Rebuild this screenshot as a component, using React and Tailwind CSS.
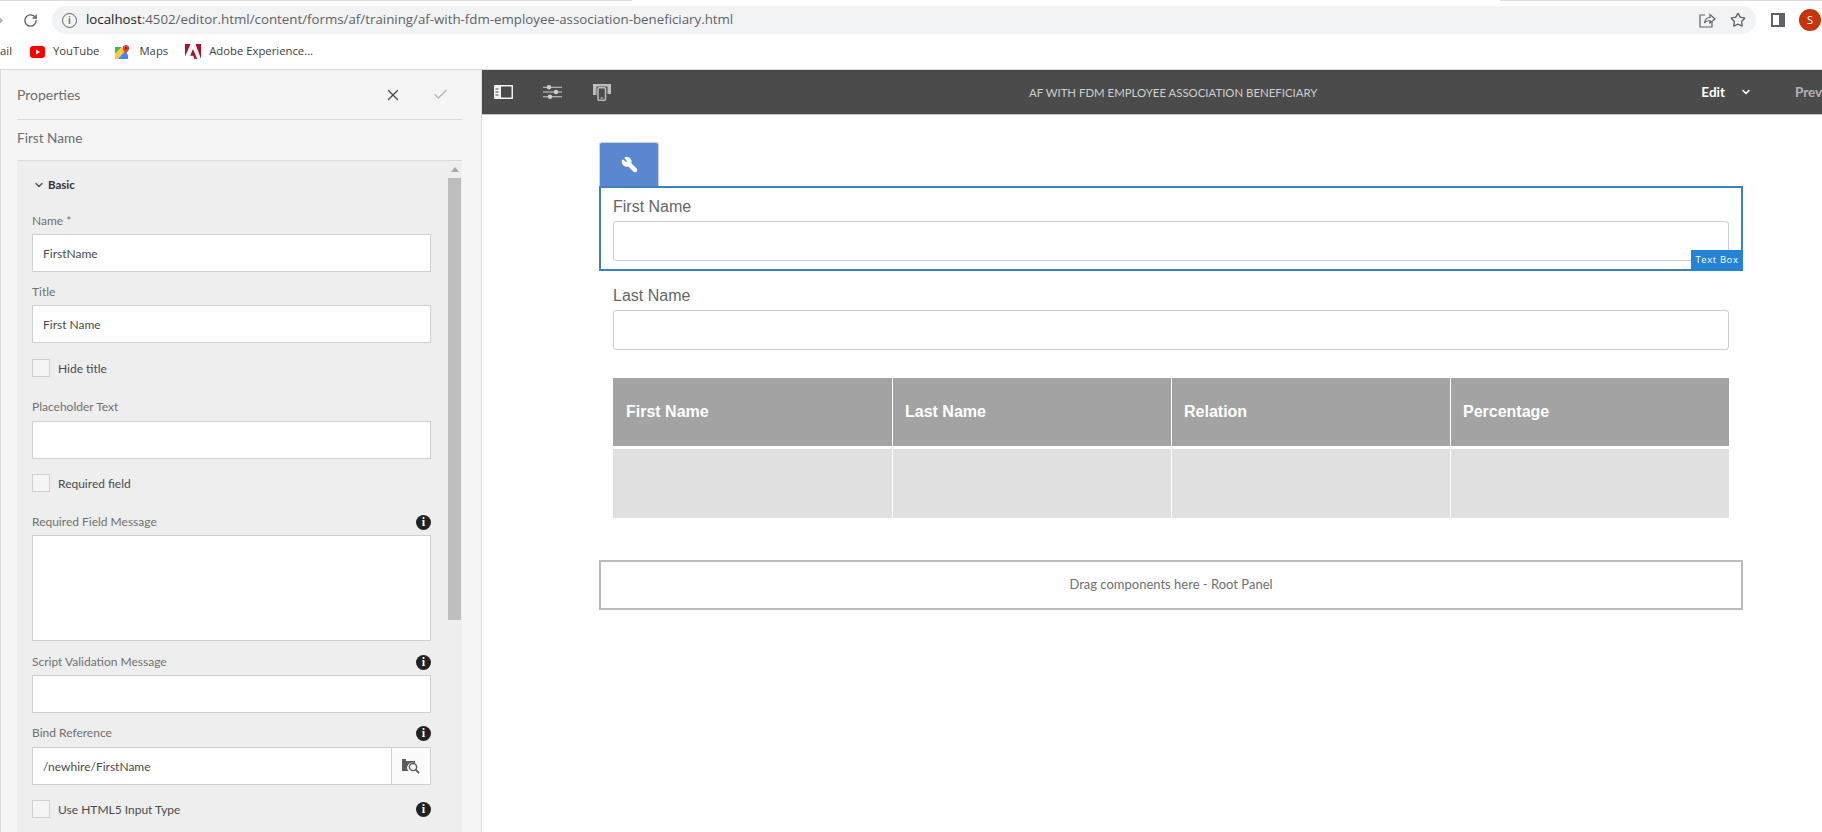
import { ArrowRight, Check, ChevronDown, RotateCw, Star, X, Wrench } from 'lucide-react'

function YouTubeIcon() {
  return (
    <svg width="15" height="12" viewBox="0 0 15 12">
      <rect width="15" height="12" rx="3" fill="#f00" />
      <path d="M6 3.5 L10 6 L6 8.5 Z" fill="#fff" />
    </svg>
  )
}

function MapsIcon() {
  return (
    <svg width="15" height="14" viewBox="0 0 15 14">
      <path d="M0 2 L7 2 L0 9 Z" fill="#48b564" />
      <path d="M0 9 L7 2 L10 6 L3 14 L0 14 Z" fill="#fcc934" />
      <path d="M3 14 L10 6 L13 10 L13 14 Z" fill="#4285f4" />
      <path d="M11 0 C9 0 7.7 1.5 7.7 3.2 C7.7 5.2 10 6.8 11 8.8 C12 6.8 14.3 5.2 14.3 3.2 C14.3 1.5 13 0 11 0 Z" fill="#ea4335" />
      <circle cx="11" cy="3.2" r="1.2" fill="#8a2a20" />
    </svg>
  )
}

function AdobeIcon() {
  return (
    <svg width="16" height="15" viewBox="0 0 16 15">
      <path d="M0 0 H5.5 L0 12.5 Z" fill="#b5092e" />
      <path d="M10.5 0 H16 V15 Z" fill="#b5092e" />
      <path d="M8 5 L12.2 15 H9.5 L8.3 11.8 H5.2 Z" fill="#b5092e" />
    </svg>
  )
}

function ShareIcon() {
  return (
    <svg width="18" height="18" viewBox="0 0 18 18" fill="none" stroke="#5f6368" strokeWidth="1.2">
      <path d="M7 4 H2 V16 H14 V11" />
      <path d="M6.5 12 C7 8.5 9.5 6.5 12 6.5 V3.5 L17 8 L12 12 V9.5 C10 9.5 8 10 6.5 12 Z" />
    </svg>
  )
}

function PanelToggleIcon() {
  return (
    <svg width="19" height="14" viewBox="0 0 19 14" fill="none">
      <rect x="0.75" y="0.75" width="17.5" height="12.5" stroke="#f2f2f2" strokeWidth="1.5" />
      <path d="M0 0 H7 V14 H0 Z" fill="#f2f2f2" />
      <path d="M1.5 4 H4.5 M1.5 7 H4.5 M1.5 10 H4.5" stroke="#4b4b4b" strokeWidth="1.1" />
    </svg>
  )
}

function SlidersIcon() {
  return (
    <svg width="19" height="14" viewBox="0 0 19 14" fill="none">
      <path d="M0 2.2 H19 M0 7 H19 M0 11.8 H19" stroke="#cfcfcf" strokeWidth="1.1" />
      <circle cx="6" cy="2.2" r="2.2" fill="#cfcfcf" />
      <circle cx="13" cy="7" r="2.2" fill="#cfcfcf" />
      <circle cx="7" cy="11.8" r="2.2" fill="#cfcfcf" />
    </svg>
  )
}

function DevicesIcon() {
  return (
    <svg width="18" height="17" viewBox="0 0 18 17" fill="none">
      <path d="M0 0 H18 V10 H14.5 V2.5 H3.5 V11 H0 Z" fill="#bcbcbc" />
      <rect x="5" y="3.8" width="7.5" height="12.4" rx="1" stroke="#bcbcbc" strokeWidth="1.5" />
      <path d="M7.5 14 H10" stroke="#bcbcbc" strokeWidth="1.2" />
    </svg>
  )
}

function FolderSearchIcon() {
  return (
    <svg width="18" height="16" viewBox="0 0 18 16">
      <path d="M0 1 H4 V3 H13 V5.5 A5 5 0 0 0 6.5 13 H0 Z" fill="#5c5c5c" />
      <circle cx="11" cy="9" r="3.6" fill="none" stroke="#5c5c5c" strokeWidth="1.5" />
      <path d="M13.6 11.6 L17 15" stroke="#5c5c5c" strokeWidth="1.8" />
    </svg>
  )
}

function InfoDot() {
  return (
    <span className="flex h-[15px] w-[15px] items-center justify-center rounded-full bg-[#222]">
      <span className="font-['Liberation_Serif',serif] text-[12px] leading-none font-bold text-white">i</span>
    </span>
  )
}

function Label({ children, info, className }) {
  return (
    <div className={`flex h-[16px] items-center justify-between text-[12px] text-[#707070] ${className}`}>
      <span>{children}</span>
      {info && <InfoDot />}
    </div>
  )
}

function TextField({ value, className = 'h-[38px]' }) {
  return (
    <div className={`flex items-center border border-[#d0d0d0] bg-white px-[10px] pt-[1px] text-[12px] text-[#4b4b4b] ${className}`}>
      {value}
    </div>
  )
}

function CheckField({ label, info }) {
  return (
    <div className="flex h-[18px] items-center">
      <span className="h-[18px] w-[18px] border border-[#d0d0d0] bg-[#f5f5f5]" />
      <span className="ml-[8px] pt-[1px] text-[12px] text-[#4b4b4b]">{label}</span>
      {info && <span className="ml-auto"><InfoDot /></span>}
    </div>
  )
}

function Browser() {
  return (
    <div className="h-[70px] shrink-0 border-b border-[#d8d8d8] bg-white font-['Open_Sans',sans-serif]">
      <div className="flex h-[1px] justify-between">
        <span className="w-[632px] bg-[#dedede]" />
        <span className="w-[322px] bg-[#dedede]" />
      </div>
      <div className="flex h-[34px] items-center pt-[4px]">
        <ArrowRight className="-ml-[10px] h-[15px] w-[15px] shrink-0 text-[#b4b4b4]" strokeWidth={2.4} />
        <RotateCw className="ml-[18px] h-[15px] w-[15px] shrink-0 text-[#5f6368]" strokeWidth={2.2} />
        <div className="ml-[14px] flex h-[28px] w-[1704px] shrink-0 items-center rounded-full bg-[#f1f3f4] pl-[10px]">
          <span className="flex h-[15px] w-[15px] items-center justify-center rounded-full border border-[#5f6368] text-[10px] leading-none font-semibold text-[#5f6368]">i</span>
          <span className="ml-[9px] text-[13.3px] text-[#202124]">localhost<span className="text-[#5f6368]">:4502/editor.html/content/forms/af/training/af-with-fdm-employee-association-beneficiary.html</span></span>
          <span className="ml-auto flex items-center gap-[14px] pr-[10px]">
            <ShareIcon />
            <Star className="h-[16px] w-[16px] text-[#5f6368]" strokeWidth={2} />
          </span>
        </div>
        <span className="ml-[15px] flex h-[14px] w-[14px] shrink-0 border-2 border-[#5f6368] bg-white">
          <span className="ml-auto h-full w-[4px] bg-[#5f6368]" />
        </span>
        <span className="ml-[14px] flex h-[22px] w-[22px] shrink-0 items-center justify-center rounded-full bg-[#c5350b] text-[11px] text-white">S</span>
      </div>
      <div className="flex h-[33px] items-center text-[11.3px] text-[#3c4043]">
        <span className="w-[13px] overflow-hidden">ail</span>
        <span className="ml-[17px] flex"><YouTubeIcon /></span>
        <span className="ml-[8px]">YouTube</span>
        <span className="ml-[16px] flex"><MapsIcon /></span>
        <span className="ml-[9px]">Maps</span>
        <span className="ml-[17px] flex"><AdobeIcon /></span>
        <span className="ml-[8px]">Adobe Experience...</span>
      </div>
    </div>
  )
}

function PropertiesPanel() {
  return (
    <aside className="flex h-full w-[482px] shrink-0 flex-col overflow-hidden border-x border-x-[#dcdcdc] bg-[#f5f5f5] font-['Lato',sans-serif]">
      <div className="mr-[19px] ml-[16px] flex h-[50px] shrink-0 items-center justify-between border-b border-[#dadada] text-[14px] text-[#6e6e6e]">
        <span>Properties</span>
        <span className="flex items-center gap-[30px] pr-[13px]">
          <X className="h-[18px] w-[18px] text-[#4b4b4b]" strokeWidth={1.8} />
          <Check className="h-[17px] w-[17px] text-[#b5b5b5]" strokeWidth={1.8} />
        </span>
      </div>
      <div className="mr-[19px] ml-[16px] flex h-[41px] shrink-0 items-center border-b border-[#dadada] pb-[3px] text-[13.6px] text-[#6e6e6e]">First Name</div>
      <div className="mr-[19px] ml-[16px] flex min-h-0 flex-1 bg-[#eeeeee]">
        <div className="w-[431px] pr-[17px] pl-[15px]">
          <div className="flex h-[48px] items-center text-[11.5px] font-bold text-[#333]">
            <ChevronDown className="ml-[1px] h-[12px] w-[12px] text-[#4b4b4b]" strokeWidth={2.5} />
            <span className="ml-[3px]">Basic</span>
          </div>
          <Label className="mt-[4px] mb-[5px]">Name *</Label>
          <TextField value="FirstName" />
          <Label className="mt-[12px] mb-[5px]">Title</Label>
          <TextField value="First Name" />
          <div className="mt-[16px]"><CheckField label="Hide title" /></div>
          <Label className="mt-[22px] mb-[6px]">Placeholder Text</Label>
          <TextField />
          <div className="mt-[15px]"><CheckField label="Required field" /></div>
          <Label className="mt-[22px] mb-[5px]" info>Required Field Message</Label>
          <TextField className="h-[106px]" />
          <Label className="mt-[13px] mb-[5px]" info>Script Validation Message</Label>
          <TextField />
          <Label className="mt-[12px] mb-[6px]" info>Bind Reference</Label>
          <div className="flex h-[38px] border border-[#d0d0d0] bg-white text-[12px] text-[#4b4b4b]">
            <div className="flex flex-1 items-center px-[10px] pt-[1px]">/newhire/FirstName</div>
            <div className="flex w-[39px] items-center justify-center rounded-r-[3px] border-l border-[#d0d0d0] bg-[#fbfbfb]"><FolderSearchIcon /></div>
          </div>
          <div className="mt-[15px]"><CheckField label="Use HTML5 Input Type" info /></div>
        </div>
        <div className="flex w-[13px] flex-col">
          <div className="flex h-[17px] items-center justify-center">
            <span className="h-0 w-0 border-x-[4px] border-b-[5px] border-x-transparent border-b-[#a8a8a8]" />
          </div>
          <div className="h-[442px] bg-[#bebebe]" />
        </div>
      </div>
    </aside>
  )
}

function FieldLabel({ label }) {
  return <div className="flex h-[20px] items-center text-[16px] text-[#666]">{label}</div>
}

function BeneficiaryTable() {
  const cols = ['First Name', 'Last Name', 'Relation', 'Percentage']
  return (
    <div className="mx-[14px] mt-[28px]">
      <div className="grid h-[68px] grid-cols-4 bg-[#a3a3a3]">
        {cols.map((c, i) => (
          <div key={c} className={`flex items-center text-[16px] font-bold text-white ${i > 0 ? 'border-l border-white pl-[12px]' : 'pl-[13px]'}`}>{c}</div>
        ))}
      </div>
      <div className="mt-[3px] grid h-[69px] grid-cols-4 bg-[#e0e0e0]">
        {cols.map((c, i) => (
          <div key={c} className={i > 0 ? 'border-l border-white' : ''} />
        ))}
      </div>
    </div>
  )
}

function Editor() {
  return (
    <main className="flex min-w-0 flex-1 flex-col bg-white">
      <header className="flex h-[45px] shrink-0 items-center border-b border-[#c8c8c8] bg-[#4b4b4b] font-['Lato',sans-serif] text-white">
        <div className="ml-[12px] flex items-center gap-[30px]">
          <PanelToggleIcon />
          <SlidersIcon />
          <span className="ml-[1px] flex"><DevicesIcon /></span>
        </div>
        <div className="ml-[418px] pt-[1px] text-[11.4px] text-[#cfcfcf]">AF WITH FDM EMPLOYEE ASSOCIATION BENEFICIARY</div>
        <div className="ml-auto flex items-center whitespace-nowrap text-[13.5px] font-bold">
          <span>Edit</span>
          <ChevronDown className="ml-[15px] h-[12px] w-[12px]" strokeWidth={3} />
          <span className="ml-[43px] w-[27px] overflow-hidden text-[#b4b4b4]">Prev</span>
        </div>
      </header>
      <div className="ml-[117px] w-[1144px] pt-[27px] font-['Liberation_Sans',sans-serif]">
        <div className="flex h-[44px] w-[60px] items-center justify-center rounded-t-[3px] border border-b-0 border-[#c8d4e8] bg-[#5a87d0]">
          <Wrench className="h-[17px] w-[17px] -scale-x-100 fill-white text-white" strokeWidth={2} />
        </div>
        <div className="relative h-[85px] border-2 border-[#3a81bd] px-[12px] pt-[9px]">
          <FieldLabel label="First Name" />
          <div className="mt-[4px] h-[40px] rounded-[3px] border border-[#ccc]" />
          <span className="absolute -right-[2px] -bottom-[2px] flex h-[21px] w-[52px] items-center justify-center bg-[#2583d6] font-['Open_Sans',sans-serif] text-[9.5px] tracking-[0.6px] text-white">Text Box</span>
        </div>
        <div className="mx-[14px] mt-[15px]">
          <FieldLabel label="Last Name" />
          <div className="mt-[4px] h-[40px] rounded-[3px] border border-[#ccc]" />
        </div>
        <BeneficiaryTable />
        <div className="mt-[42px] flex h-[50px] items-center justify-center border-2 border-[#bbb] font-['Lato',sans-serif] text-[13px] text-[#707070]">Drag components here - Root Panel</div>
      </div>
    </main>
  )
}

export default function App() {
  return (
    <div className="flex h-[832px] w-[1822px] flex-col overflow-hidden bg-white">
      <Browser />
      <div className="flex min-h-0 flex-1">
        <PropertiesPanel />
        <Editor />
      </div>
    </div>
  )
}
